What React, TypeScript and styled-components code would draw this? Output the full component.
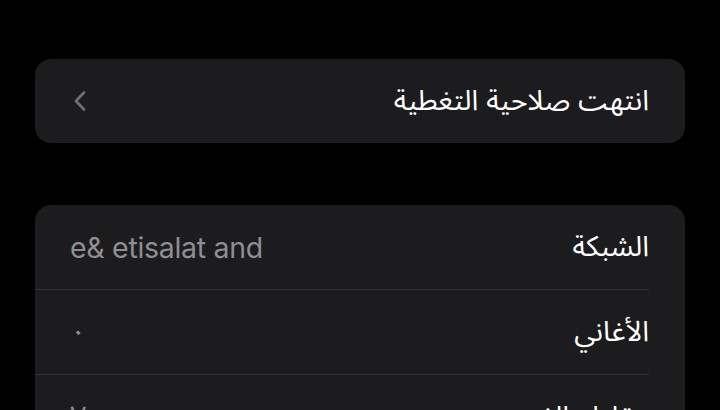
import styled, { createGlobalStyle } from 'styled-components';

const GlobalStyle = createGlobalStyle`
  html, body {
    margin: 0;
    padding: 0;
    background: #000;
  }
  body {
    font-family: Inter, "Noto Sans Arabic", "DejaVu Sans", sans-serif;
    -webkit-font-smoothing: antialiased;
  }
`;

const Page = styled.div`
  direction: rtl;
  display: flex;
  flex-direction: column;
  gap: 62px;
  padding: 59px 35px 0;
  height: 410px;
  box-sizing: border-box;
  overflow: hidden;
`;

const Card = styled.div`
  background: #1c1c1e;
  border-radius: 16px;
  overflow: hidden;
  flex-shrink: 0;
`;

const Row = styled.div<{ $last?: boolean }>`
  display: flex;
  align-items: center;
  justify-content: space-between;
  height: ${(p) => (p.$last ? '84px' : '85px')};
  box-sizing: border-box;
  margin-inline-start: 36px;
  padding-inline-end: 35px;
  border-bottom: ${(p) => (p.$last ? 'none' : '1px solid #333336')};
`;

const Label = styled.span`
  color: #fff;
  font-size: 28.5px;
`;

const Value = styled.span`
  color: #8e8e93;
  font-size: 28.5px;
`;

const LatinValue = styled(Value)`
  direction: ltr;
  font-family: Inter, sans-serif;
  font-size: 28.5px;
  letter-spacing: -0.3px;
`;

const Chevron = styled.svg`
  width: 12px;
  height: 20px;
  margin-inline-end: 4px;
`;

function BackChevron() {
  return (
    <Chevron viewBox="0 0 12 20">
      <polyline
        points="10,1.5 2,10 10,18.5"
        fill="none"
        stroke="#707074"
        strokeWidth="2.6"
        strokeLinecap="round"
        strokeLinejoin="round"
      />
    </Chevron>
  );
}

const rows = [
  { label: 'الشبكة', value: 'e& etisalat and', latin: true },
  { label: 'الأغاني', value: '٠' },
  { label: 'مقاطع الفيديو', value: '٧' },
];

function App() {
  return (
    <>
      <GlobalStyle />
      <Page>
        <Card>
          <Row $last>
            <Label>انتهت صلاحية التغطية</Label>
            <BackChevron />
          </Row>
        </Card>
        <Card>
          {rows.map((row) => (
            <Row key={row.label}>
              <Label>{row.label}</Label>
              {row.latin ? (
                <LatinValue>{row.value}</LatinValue>
              ) : (
                <Value>{row.value}</Value>
              )}
            </Row>
          ))}
        </Card>
      </Page>
    </>
  );
}

export default App;
